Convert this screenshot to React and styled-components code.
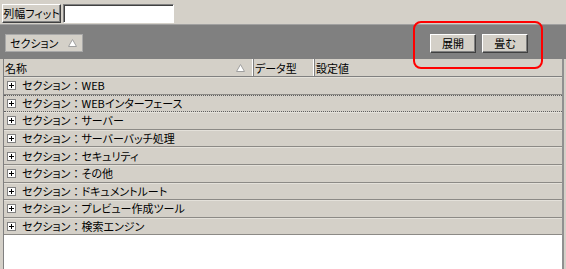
import React from 'react'
import styled, { createGlobalStyle } from 'styled-components'

const Global = createGlobalStyle`
  html, body { margin: 0; padding: 0; background: #d4d0c8; }
  * { box-sizing: border-box; }
`

const sections = [
  'WEB',
  'WEBインターフェース',
  'サーバー',
  'サーバーバッチ処理',
  'セキュリティ',
  'その他',
  'ドキュメントルート',
  'プレビュー作成ツール',
  '検索エンジン',
]

function PlusBox() {
  return (
    <svg width="9" height="9" viewBox="0 0 9 9">
      <rect x="0.5" y="0.5" width="8" height="8" fill="#fff" stroke="#808080" />
      <path d="M2 4.5h5M4.5 2v5" stroke="#000" />
    </svg>
  )
}

function Triangle() {
  return (
    <svg width="9" height="8" viewBox="0 0 9 8">
      <path d="M4.5 0.5L8.5 7.5H0.5Z" fill="#fff" stroke="#a0a0a0" />
    </svg>
  )
}

function App() {
  return (
    <Page>
      <Global />
      <TopBar>
        <ClassicButton width={59}>列幅フィット</ClassicButton>
        <Field />
      </TopBar>
      <Toolbar>
        <GroupChip>
          <span>セクション</span>
          <Triangle />
        </GroupChip>
        <ButtonGroup>
          <ClassicButton width={46}>展開</ClassicButton>
          <ClassicButton width={46}>畳む</ClassicButton>
        </ButtonGroup>
        <Highlight />
      </Toolbar>
      <Grid>
        <Header>
          <HeadCell width={250}>
            <span>名称</span>
            <Triangle />
          </HeadCell>
          <HeadCell width={61}>データ型</HeadCell>
          <HeadCell>設定値</HeadCell>
        </Header>
        {sections.map((name, i) => (
          <Row key={name} focused={i === 1}>
            <PlusBox />
            <RowLabel>
              セクション<Colon>：</Colon>{name}
            </RowLabel>
          </Row>
        ))}
      </Grid>
    </Page>
  )
}

export default App

const Page = styled.div`
  width: 566px;
  height: 269px;
  overflow: hidden;
  background: #d4d0c8;
  font-family: "Noto Sans CJK JP", "Liberation Sans", sans-serif;
  font-feature-settings: "palt";
  font-size: 11px;
  color: #000;
  white-space: nowrap;
  display: flex;
  flex-direction: column;
`

const TopBar = styled.div`
  height: 24px;
  display: flex;
  align-items: center;
  gap: 2px;
  padding: 2px 0 0 2px;
`

const ClassicButton = styled.div`
  width: ${p => p.width}px;
  height: 19px;
  display: flex;
  align-items: center;
  justify-content: center;
  background: #d4d0c8;
  border-top: 1px solid #fff;
  border-left: 1px solid #fff;
  border-right: 1px solid #404040;
  border-bottom: 1px solid #404040;
  box-shadow: inset -1px -1px 0 #808080;
  font-size: 11px;
  line-height: 1;
`

const Field = styled.div`
  width: 111px;
  height: 19px;
  background: #fff;
  border-top: 1px solid #808080;
  border-left: 1px solid #808080;
  border-right: 1px solid #fff;
  border-bottom: 1px solid #fff;
  box-shadow: inset 1px 1px 0 #404040;
`

const Toolbar = styled.div`
  position: relative;
  height: 35px;
  background: #808080;
  border-top: 1px solid #a0a0a0;
  display: flex;
  align-items: center;
  justify-content: space-between;
  padding: 0 38px 0 5px;
`

const GroupChip = styled.div`
  width: 78px;
  height: 18px;
  background: #d4d0c8;
  border: 1px solid #a8a8a8;
  display: flex;
  align-items: center;
  justify-content: space-between;
  padding: 0 5px 0 4px;
  margin-top: 1px;
`

const ButtonGroup = styled.div`
  display: flex;
  gap: 6px;
  margin-top: 3px;
`

const Highlight = styled.div`
  position: absolute;
  left: 413px;
  top: -4px;
  width: 130px;
  height: 48px;
  border: 2px solid #f00;
  border-radius: 8px;
  pointer-events: none;
`

const Grid = styled.div`
  flex: 1;
  margin: 0 2px 0 3px;
  background: #fff;
  border-left: 1px solid #808080;
  border-right: 2px solid #909090;
  display: flex;
  flex-direction: column;
`

const Header = styled.div`
  height: 18px;
  display: flex;
  background: #d4d0c8;
  border-bottom: 1px solid #808080;
`

const HeadCell = styled.div`
  ${p => (p.width ? `width: ${p.width}px;` : 'flex: 1;')}
  display: flex;
  align-items: center;
  justify-content: space-between;
  padding: 0 8px 0 1px;
  border-right: 1px solid #808080;
  box-shadow: inset -1px 0 0 #fff;
  font-size: 11px;
  &:last-child { border-right: none; box-shadow: none; }
`

const Row = styled.div`
  height: 17.6px;
  display: flex;
  align-items: center;
  gap: 6px;
  padding-left: 3px;
  background: #d4d0c8;
  border-top: 1px ${p => (p.focused ? 'dotted #606060' : 'solid #e4e1da')};
  border-bottom: 1px ${p => (p.focused ? 'dotted #606060' : 'solid #8c8a86')};
`

const RowLabel = styled.span`
  font-size: 11px;
  line-height: 1;
`

const Colon = styled.span`
  font-feature-settings: normal;
`
